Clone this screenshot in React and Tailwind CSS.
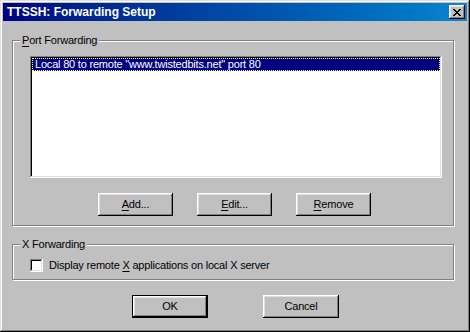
import React from "react";

const raised =
  "shadow-[inset_-1px_-1px_0_#000,inset_1px_1px_0_#fff,inset_-2px_-2px_0_#808080,inset_2px_2px_0_#dfdfdf]";

function Btn({ children, w = "w-[75px]", def = false }) {
  if (def) {
    return (
      <div className={`${w} h-[23px] border border-black`}>
        <div
          className={`w-full h-full bg-[#c0c0c0] ${raised} flex items-center justify-center text-black`}
        >
          {children}
        </div>
      </div>
    );
  }
  return (
    <div
      className={`${w} h-[23px] bg-[#c0c0c0] ${raised} flex items-center justify-center text-black`}
    >
      {children}
    </div>
  );
}

function U({ children }) {
  return <span className="underline underline-offset-[2px]">{children}</span>;
}

export default function App() {
  return (
    <div
      className="w-[470px] h-[332px] bg-[#c0c0c0] p-[3px] flex flex-col text-[11px] leading-[13px] tracking-[-0.2px] text-black shadow-[inset_-1px_-1px_0_#000,inset_1px_1px_0_#dfdfdf,inset_-2px_-2px_0_#808080,inset_2px_2px_0_#fff]"
      style={{ fontFamily: '"Liberation Sans", Arial, sans-serif' }}
    >
      {/* Title bar */}
      <div className="h-[18px] bg-gradient-to-r from-[#000080] to-[#1084d0] flex items-center pl-[4px] pr-[2px]">
        <span className="text-white font-bold text-[12px] leading-[14px] tracking-normal flex-1">
          TTSSH: Forwarding Setup
        </span>
        <div className={`w-[16px] h-[14px] bg-[#c0c0c0] ${raised} flex items-center justify-center`}>
          <svg width="8" height="7" viewBox="0 0 8 7" shapeRendering="crispEdges">
            <path
              d="M0 0h2v1h-2zM6 0h2v1h-2zM1 1h2v1h-2zM5 1h2v1h-2zM2 2h4v1h-4zM3 3h2v1h-2zM2 4h4v1h-4zM1 5h2v1h-2zM5 5h2v1h-2zM0 6h2v1h-2zM6 6h2v1h-2z"
              fill="#000"
            />
          </svg>
        </div>
      </div>

      {/* Port Forwarding group */}
      <div className="relative ml-[9px] mt-[19px] w-[442px] h-[186px] border border-[#808080] shadow-[1px_1px_0_#fff,inset_1px_1px_0_#fff] flex flex-col">
        <span className="absolute left-[7px] top-[-7px] bg-[#c0c0c0] px-[2px]">
          <U>P</U>ort Forwarding
        </span>
        <div className="ml-[17px] mt-[15px] w-[412px] h-[122px] bg-white p-[2px] shadow-[inset_-1px_-1px_0_#fff,inset_1px_1px_0_#808080,inset_-2px_-2px_0_#dfdfdf,inset_2px_2px_0_#000]">
          <div className="h-[13px] bg-[#000080] border border-dotted border-[#ffff99] text-white flex items-center pl-[2px]">
            Local 80 to remote "www.twistedbits.net" port 80
          </div>
        </div>
        <div className="mt-[15px] flex gap-[24px] pl-[85px]">
          <Btn>
            <span><U>A</U>dd...</span>
          </Btn>
          <Btn>
            <span><U>E</U>dit...</span>
          </Btn>
          <Btn>
            <span><U>R</U>emove</span>
          </Btn>
        </div>
      </div>

      {/* X Forwarding group */}
      <div className="relative ml-[9px] mt-[18px] w-[442px] h-[36px] border border-[#808080] shadow-[1px_1px_0_#fff,inset_1px_1px_0_#fff] flex items-start">
        <span className="absolute left-[7px] top-[-7px] bg-[#c0c0c0] px-[2px]">
          X Forwarding
        </span>
        <div className="ml-[17px] mt-[14px] flex items-center gap-[6px]">
          <div className="w-[13px] h-[13px] bg-white shadow-[inset_-1px_-1px_0_#fff,inset_1px_1px_0_#808080,inset_-2px_-2px_0_#dfdfdf,inset_2px_2px_0_#000]" />
          <span>
            Display remote <U>X</U> applications on local X server
          </span>
        </div>
      </div>

      {/* OK / Cancel */}
      <div className="mt-[15px] flex gap-[55px] pl-[129px]">
        <Btn def w="w-[76px]">
          <span>OK</span>
        </Btn>
        <Btn w="w-[76px]">
          <span>Cancel</span>
        </Btn>
      </div>
    </div>
  );
}
